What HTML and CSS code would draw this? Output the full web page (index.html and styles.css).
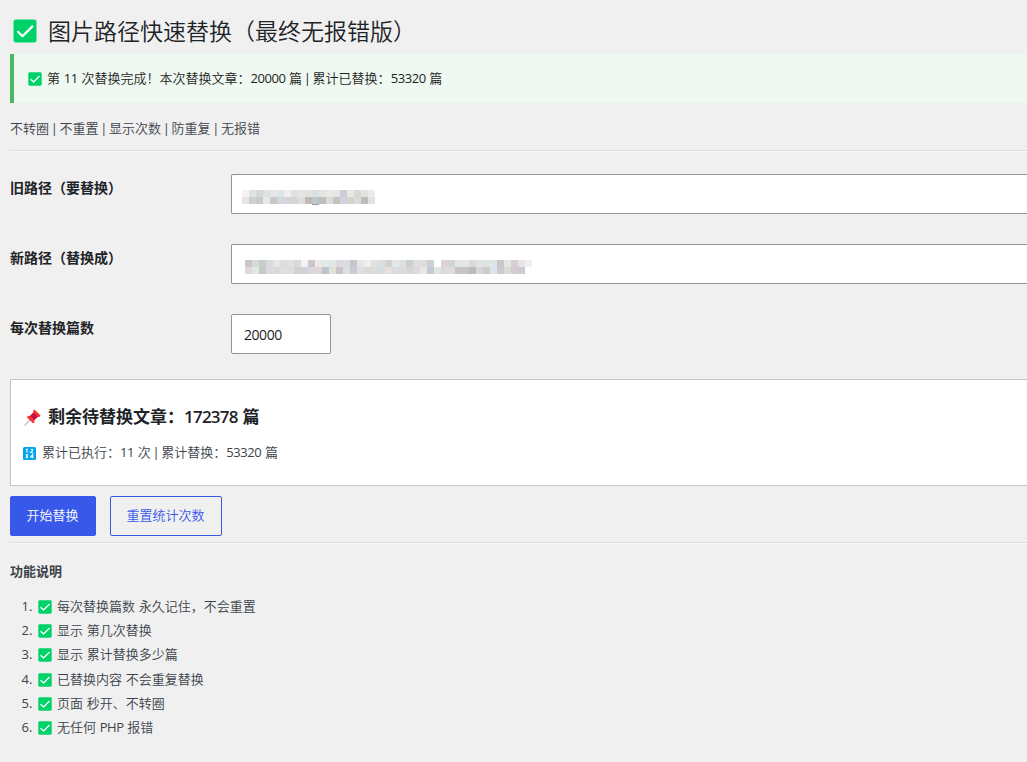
FILE: index.html
```html
<!DOCTYPE html>
<html lang="zh-CN">
<head>
<meta charset="utf-8">
<title>图片路径快速替换</title>
<link rel="stylesheet" href="styles.css">
</head>
<body>
<svg class="defs" width="0" height="0">
  <symbol id="check" viewBox="0 0 24 24">
    <rect x="0.5" y="0.5" width="23" height="23" rx="2.5" fill="#00d26a"/>
    <path d="M5 12.8l4.5 4.4L19.4 7.4" fill="none" stroke="#fff" stroke-width="2.2" stroke-linecap="round" stroke-linejoin="round"/>
  </symbol>
</svg>
<div class="wrap">
  <h1><svg class="emoji"><use href="#check"/></svg><span>图片路径快速替换（最终无报错版）</span></h1>

  <div class="notice">
    <svg class="emoji"><use href="#check"/></svg><span>第 <i>11</i> 次替换完成！本次替换文章：<i>20000</i> 篇 <b>|</b> 累计已替换：<i>53320</i> 篇</span>
  </div>

  <p class="desc">不转圈 <b>|</b> 不重置 <b>|</b> 显示次数 <b>|</b> 防重复 <b>|</b> 无报错</p>
  <hr>

  <form>
    <div class="form-row">
      <label>旧路径（要替换）</label>
      <div class="field">
        <svg class="mosaic" width="134" height="15" shape-rendering="crispEdges" id="oldPath"></svg>
      </div>
    </div>
    <div class="form-row">
      <label>新路径（替换成）</label>
      <div class="field new">
        <svg class="mosaic" width="290" height="15" shape-rendering="crispEdges" id="newPath"></svg>
      </div>
    </div>
    <div class="form-row">
      <label>每次替换篇数</label>
      <div class="field small"><i>20000</i></div>
    </div>

    <div class="card">
      <h3>
        <svg class="emoji" viewBox="0 0 17 17">
          <path d="M6.3 10.7L1 16.2" stroke="#b9b9b9" stroke-width="1.2" stroke-linecap="round"/>
          <path d="M10.5.8L16.4 6.6 15 8 13.8 7.8 10.5 11 10.2 13.7 9 14.3 3 8.2 3.6 7 6.3 6.7 9.4 3.5 9.2 2.1z" fill="#f8312f"/>
          <path d="M6.3 6.7L9.4 3.5 13.8 7.8 10.5 11z" fill="#ca0b4a"/>
          <path d="M10.5.8L16.4 6.6 15 8 9.2 2.1z" fill="#f8312f"/>
        </svg><span>剩余待替换文章：<i>172378</i> 篇</span>
      </h3>
      <p>
        <svg class="emoji" viewBox="0 0 13 13">
          <rect width="13" height="13" rx="1.5" fill="#00a6ed"/>
          <path d="M3 2.7l1-.6v3.6M7.8 2.5q1.8-.8 1.8.6 0 .9-1.8 2.4h2.1M2.8 7.7h1.8l-1 1.2q1.4.2.9 1.3-.6.8-1.8.3M9.7 11.2V7.5L7.8 10h2.6" fill="none" stroke="#fff" stroke-width="1.1"/>
        </svg><span>累计已执行：<i>11</i> 次 <b>|</b> 累计替换：<i>53320</i> 篇</span>
      </p>
    </div>

    <div class="btn-row">
      <button type="button" class="primary">开始替换</button>
      <button type="button" class="secondary">重置统计次数</button>
    </div>
  </form>
  <hr>

  <h4>功能说明</h4>
  <ol>
    <li><svg class="emoji"><use href="#check"/></svg><span>每次替换篇数 永久记住，不会重置</span></li>
    <li><svg class="emoji"><use href="#check"/></svg><span>显示 第几次替换</span></li>
    <li><svg class="emoji"><use href="#check"/></svg><span>显示 累计替换多少篇</span></li>
    <li><svg class="emoji"><use href="#check"/></svg><span>已替换内容 不会重复替换</span></li>
    <li><svg class="emoji"><use href="#check"/></svg><span>页面 秒开、不转圈</span></li>
    <li><svg class="emoji"><use href="#check"/></svg><span>无任何 <i>PHP</i> 报错</span></li>
  </ol>
</div>

<script src="mosaic.js"></script>
</body>
</html>
```

FILE: styles.css
```css
*{box-sizing:border-box;margin:0;padding:0;}
body{background:#f0f0f0;color:#3c434a;font:350 13px/1.5 "Open Sans","Noto Sans CJK SC",sans-serif;word-spacing:.3px;}
i{font-style:normal;font-weight:400;letter-spacing:-.033em;}
b{font-weight:400;margin:0 -2px;}
.defs{position:absolute;}
.wrap{padding-left:10px;}
.emoji{width:14px;height:14px;flex:none;margin-right:5px;}
h1{display:flex;align-items:center;height:54px;padding:8px 0 1px 4px;font-size:23px;font-weight:350;color:#1d2327;line-height:30px;}
h1 .emoji{width:24px;height:24px;margin:0 11px 0 -1px;}
.notice{display:flex;align-items:center;height:49px;padding-left:14px;border-left:4px solid #4ab866;background:#eff9f1;color:#1e1e1e;}
.desc{height:47px;padding-top:15px;line-height:20px;}
hr{border:0;border-top:1px solid #dcdcde;border-bottom:1px solid #f6f7f7;}
.form-row{display:flex;height:70px;}
form .form-row:first-child{margin-top:22px;}
label{width:221px;padding-top:5px;font-size:14px;font-weight:600;line-height:18px;color:#1d2327;}
.field{flex:1;height:40px;padding:15px 0 0 10px;border:1px solid #949494;border-right:0;border-radius:2px 0 0 2px;background:#fff;}
.field.new{padding-left:13px;}
.field.small{flex:none;width:100px;padding:10px 12px;border-right:1px solid #949494;border-radius:2px;font-size:14px;line-height:20px;color:#1e1e1e;}
.mosaic{display:block;}
.card{height:107px;margin-top:-5px;padding:24px 12px;border:1px solid #c3c4c7;border-right:0;background:#fff;}
.card h3{display:flex;align-items:center;height:26px;font-size:17px;font-weight:600;color:#1d2327;}
.card h3 .emoji{width:17px;height:17px;margin:0 7px 0 1px;}
.card h3 i{font-weight:600;letter-spacing:-.045em;}
.card p{display:flex;align-items:center;height:20px;margin-top:13px;}
.card p .emoji{width:13px;height:13px;margin-right:6px;}
.btn-row{display:flex;gap:14px;margin:10px 0 6px;}
button{height:40px;padding-right:1px;border:1px solid #3858e9;border-radius:2px;font:inherit;}
.primary{width:86px;background:#3858e9;color:#fff;}
.secondary{width:112px;background:transparent;color:#3858e9;}
h4{margin-top:17px;font-size:13px;font-weight:600;line-height:20px;}
ol{margin:13px 0 0 26px;}
li{height:24.2px;padding-left:2px;line-height:24px;}
li::marker{font-weight:400;}
li .emoji{display:inline-block;vertical-align:-3px;}
```

FILE: mosaic.js
```js
// masked values of the two path fields: one colour per 7px block
const masks = {
  oldPath: [
    'f5f3f2 dfe3e4 d3d8d6 dee0e2 e3e9e9 dce6e8 f1eef2 dfe2df e5e5e7 e2e2e2 dae0e2 e2e5e5 e9e8e3 e3e5e7 cdced3 e8e8e4 d7d9d3 e2e4e4 ebecec',
    'eae4e3 cbd1d0 c5ccca e9e7ec c9c8c2 d3d6de d8d4dc d1d7d9 e3dbdf bdb9b4 bdc6c8 bcbfba e0d9d9 c6c3be cfd2e0 d3d3ca dadbdc c0bbbb e0e3e2'
  ],
  newPath: [
    'ccc6c6 d5dbd8 c6cec8 dad9df e5e7e3 dcdddb e0e2e0 d9dade f0f4f5 cbc4ce f0e8e6 e1e8e6 e1e9e7 ded8df d7dfe0 cac4cf e3e6e6 eeefea e0e3e2 d9dfe0 d1d2d3 e3e6ea dde0e1 cbcfc9 dadfdd e0dad9 cbd1d9 ffffff ded3d5 d0d4d7 e3e4e4 e5e7e5 ddd9d7 e2e4e0 dde4e5 dde5e6 c6c6cc e5e7e3 d6ced4 e7e4e2 eeeff6',
    'e0d8dc e1e6e5 c4cbc5 dbdbe1 d9dbd9 dfe0dd dddddd d0d1d2 d2d2da d9d8de dcd7d2 bdc5cc e1e3d9 c9c4cb dcdee0 c9ccd3 e3dde0 dadada dbdbdc d5dde0 ecdddd d9dde1 dadadc d6d6d3 ded9e0 e6e8e2 c4cbd4 e1e3e1 dbdbdb e1dadd c8c4c6 c6c3c5 bbbcbb d5d8da d0cbc4 dce5ed cfc8cd dadbd7 d7cbd0 cacdd3'
  ]
};
for (const id in masks) {
  let out = '';
  masks[id].forEach((row, y) => row.split(' ').forEach((c, x) => {
    out += `<rect x="${x * 7}" y="${y * 7}" width="7" height="7" fill="#${c}"/>`;
  }));
  if (id === 'oldPath') out += '<rect x="70" y="14" width="7" height="1" fill="#8f999f"/>';
  document.getElementById(id).innerHTML = out;
}
```
